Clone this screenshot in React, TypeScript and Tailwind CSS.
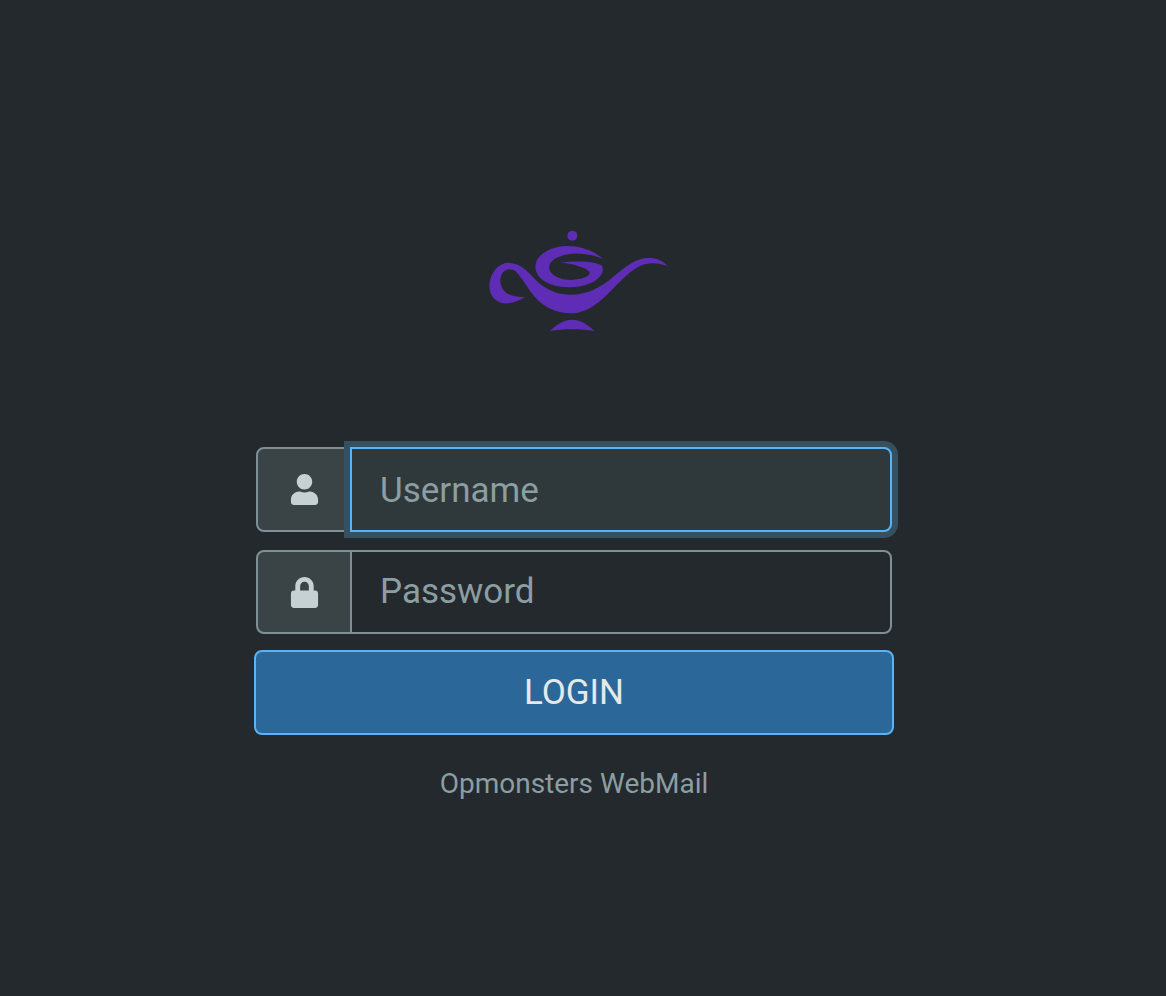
import { FaUser, FaLock } from "react-icons/fa";

function Logo() {
  return (
    <svg viewBox="0 0 660 360" width={220} height={120} className="block" fill="#5f2db5">
      <circle cx="307" cy="47" r="15" />
      <path d="M240 333C262 311 284 299 306 299C330 299 352 312 373 333C330 326 280 326 240 333Z" />
      <path d="M593 139C575 116 548 111 522 115C490 120 462 145 430 170C395 200 355 224 300 224C255 224 222 205 195 178C170 150 150 128 112 128C80 132 58 165 58 200C60 235 85 252 115 250C135 248 150 240 165 231C140 232 115 228 100 210C88 192 88 170 100 156C110 146 125 145 138 155C155 172 170 200 195 232C225 265 265 281 305 280C345 279 375 258 410 225C440 195 470 160 505 140C535 126 565 128 593 139Z" />
      <path d="M400 118C370 90 330 78 290 78C250 79 215 95 200 122C188 150 205 178 240 192C275 205 325 206 360 190C390 177 405 155 396 138C380 124 320 122 270 128C305 130 345 140 358 155C365 168 340 178 305 180C270 180 240 165 237 143C238 120 265 106 305 101C340 98 375 106 400 118Z" />
    </svg>
  );
}

export default function App() {
  const font = "[font-family:Roboto,sans-serif]";
  return (
    <div className={`min-h-[996px] bg-[#24292d] pt-[220px] ${font}`}>
      <div className="ml-[470px] w-[220px]">
        <Logo />
      </div>
      <form className="ml-[254px] mt-[107px] flex w-[640px] flex-col">
        <div className="mx-[2px] flex h-[85px]">
          <div className="flex w-[96px] shrink-0 items-center justify-center rounded-l-[8px] border-2 border-[#7f9094] bg-[#3a4447] text-[#c6d1d3]">
            <FaUser size={31} />
          </div>
          <input
            readOnly
            placeholder="Username"
            className="relative z-10 -ml-[2px] min-w-0 flex-1 rounded-r-[8px] border-2 border-[#5ab3f4] bg-[#2f383b] pl-[28px] pt-[3px] text-[35px] shadow-[0_0_0_6px_#37505f] outline-none placeholder:text-[#8b9ea2]"
          />
        </div>
        <div className="mx-[2px] mt-[18px] flex h-[84px]">
          <div className="flex w-[96px] shrink-0 items-center justify-center rounded-l-[8px] border-2 border-[#7f9094] bg-[#3a4447] text-[#c6d1d3]">
            <FaLock size={31} />
          </div>
          <input
            readOnly
            placeholder="Password"
            className="-ml-[2px] min-w-0 flex-1 rounded-r-[8px] border-2 border-[#7f9094] bg-[#24292d] pl-[28px] pt-[1px] text-[35px] outline-none placeholder:text-[#8b9ea2]"
          />
        </div>
        <button
          type="button"
          className="mt-[16px] h-[85px] rounded-[8px] border-2 border-[#5ab3f4] bg-[#2c6799] pt-[1px] text-[35px] font-normal text-[#e4e9ec]"
        >
          LOGIN
        </button>
        <div className="mt-[33px] text-center text-[28px] leading-[32px] text-[#8b9ea2]">Opmonsters WebMail</div>
      </form>
    </div>
  );
}
